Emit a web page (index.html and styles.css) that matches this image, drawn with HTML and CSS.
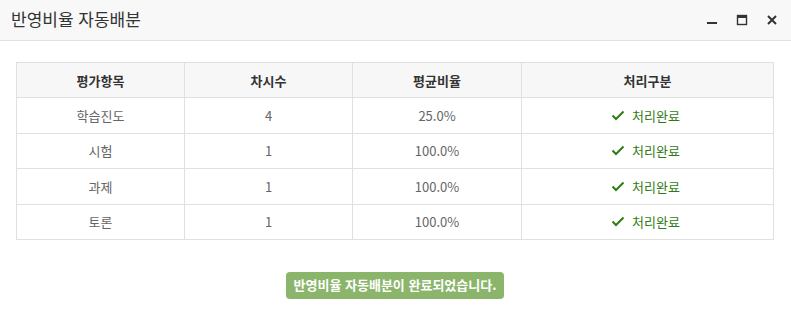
FILE: index.html
```html
<!DOCTYPE html>
<html lang="ko">
<head>
    <meta charset="UTF-8">
    <title>반영비율 자동배분</title>
    <link rel="stylesheet" href="styles.css">
</head>
<body>
    <div class="dialog">
        <div class="dialog-header">
            <h1 class="dialog-title">반영비율 자동배분</h1>
            <div class="window-buttons">
                <button class="win-btn" title="최소화">
                    <svg width="12" height="12" viewBox="0 0 12 12"><rect x="1" y="8" width="10" height="2" fill="#333"/></svg>
                </button>
                <button class="win-btn" title="최대화">
                    <svg width="12" height="12" viewBox="0 0 12 12"><rect x="1.5" y="1.5" width="9" height="9" fill="none" stroke="#333" stroke-width="1.4"/><rect x="1" y="1" width="10" height="3" fill="#333"/></svg>
                </button>
                <button class="win-btn" title="닫기">
                    <svg width="12" height="12" viewBox="0 0 12 12"><path d="M2 2 L10 10 M10 2 L2 10" stroke="#333" stroke-width="2"/></svg>
                </button>
            </div>
        </div>

        <div class="dialog-body">
            <table class="result-table">
                <thead>
                    <tr>
                        <th class="col-item">평가항목</th>
                        <th class="col-count">차시수</th>
                        <th class="col-ratio">평균비율</th>
                        <th>처리구분</th>
                    </tr>
                </thead>
                <tbody>
                    <tr>
                        <td>학습진도</td>
                        <td>4</td>
                        <td>25.0%</td>
                        <td><span class="done"><svg width="14" height="11" viewBox="0 0 14 11"><path d="M1.5 5.5 L5 9 L12.5 1.5" fill="none" stroke="#2f7d12" stroke-width="2"/></svg>처리완료</span></td>
                    </tr>
                    <tr>
                        <td>시험</td>
                        <td>1</td>
                        <td>100.0%</td>
                        <td><span class="done"><svg width="14" height="11" viewBox="0 0 14 11"><path d="M1.5 5.5 L5 9 L12.5 1.5" fill="none" stroke="#2f7d12" stroke-width="2"/></svg>처리완료</span></td>
                    </tr>
                    <tr>
                        <td>과제</td>
                        <td>1</td>
                        <td>100.0%</td>
                        <td><span class="done"><svg width="14" height="11" viewBox="0 0 14 11"><path d="M1.5 5.5 L5 9 L12.5 1.5" fill="none" stroke="#2f7d12" stroke-width="2"/></svg>처리완료</span></td>
                    </tr>
                    <tr>
                        <td>토론</td>
                        <td>1</td>
                        <td>100.0%</td>
                        <td><span class="done"><svg width="14" height="11" viewBox="0 0 14 11"><path d="M1.5 5.5 L5 9 L12.5 1.5" fill="none" stroke="#2f7d12" stroke-width="2"/></svg>처리완료</span></td>
                    </tr>
                </tbody>
            </table>

            <div class="message-wrap">
                <span class="message">반영비율 자동배분이 완료되었습니다.</span>
            </div>
        </div>
    </div>
</body>
</html>
```

FILE: styles.css
```css
body {
    margin: 0;
    padding: 0;
    font-family: "Noto Sans CJK KR", "Noto Sans", sans-serif;
    background-color: #fff;
    color: #333;
}
.dialog {
    width: 791px;
    height: 326px;
    background-color: #fff;
}
.dialog-header {
    display: flex;
    align-items: center;
    justify-content: space-between;
    height: 41px;
    background-color: #f8f8f8;
    border-bottom: 1px solid #e2e2e2;
    box-sizing: border-box;
    padding: 0 13px 0 11px;
}
.dialog-title {
    margin: 0;
    font-size: 17px;
    font-weight: normal;
    color: #333;
    line-height: 1;
    padding-bottom: 3px;
}
.window-buttons {
    display: flex;
    gap: 18px;
}
.win-btn {
    border: none;
    background: none;
    padding: 0;
    width: 12px;
    height: 12px;
    cursor: pointer;
}
.win-btn svg {
    display: block;
}
.dialog-body {
    padding: 21px 17px 0 16px;
}
.result-table {
    width: 100%;
    border-collapse: collapse;
    font-size: 13px;
    table-layout: fixed;
}
.result-table th,
.result-table td {
    border: 1px solid #e0e0e0;
    text-align: center;
    padding: 0;
    box-sizing: border-box;
}
.result-table th {
    height: 35px;
    background-color: #f7f7f7;
    font-weight: bold;
    color: #333;
}
.result-table td {
    height: 35.5px;
    color: #666;
}
.col-item {
    width: 168px;
}
.col-count {
    width: 168px;
}
.col-ratio {
    width: 169px;
}
.done {
    display: inline-flex;
    align-items: center;
    gap: 7px;
    color: #2f7d12;
    margin-left: -4px;
}
.done svg {
    display: block;
}
.message-wrap {
    text-align: center;
    padding-top: 31px;
}
.message {
    display: inline-block;
    background-color: #8ab56b;
    color: #fff;
    font-size: 13px;
    font-weight: bold;
    padding: 4px 8px 5px;
    border-radius: 4px;
    line-height: 18px;
}
```
